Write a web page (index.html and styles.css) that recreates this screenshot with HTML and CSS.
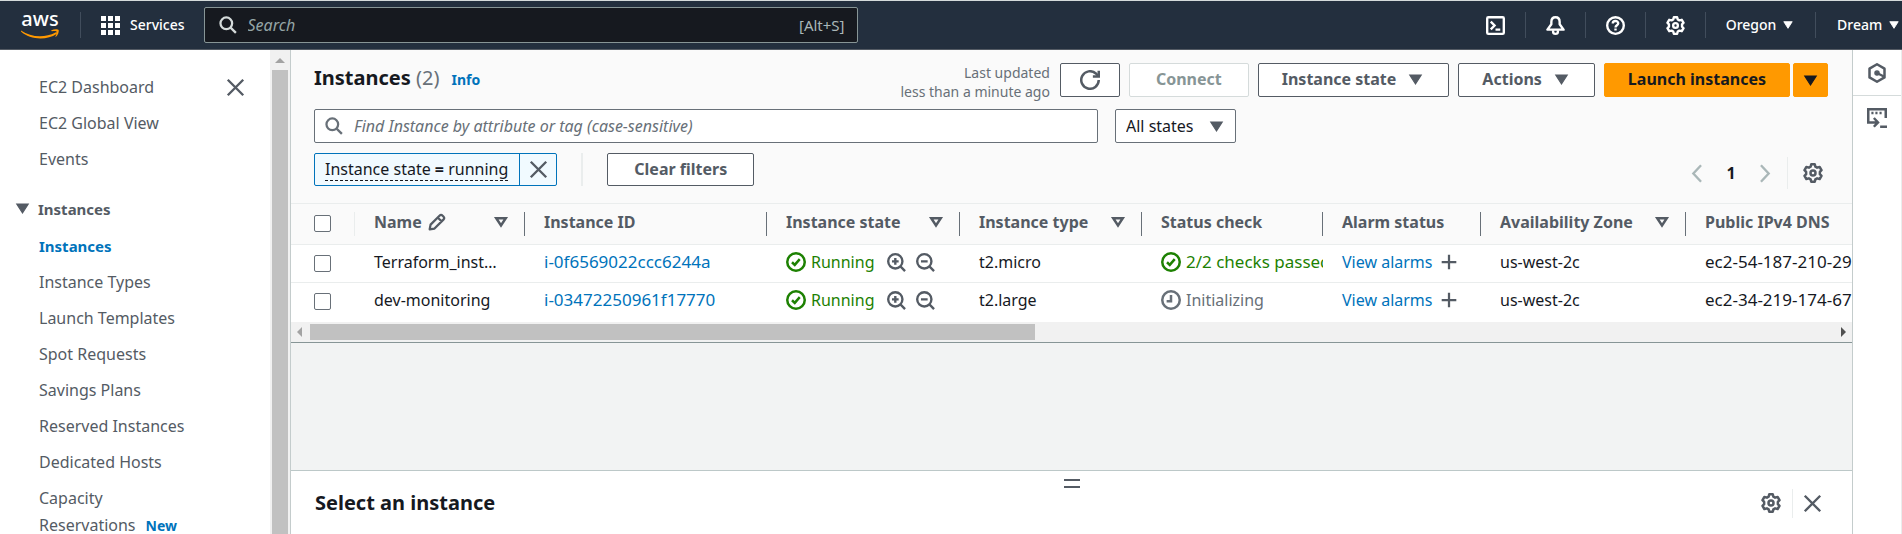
FILE: index.html
```html
<!DOCTYPE html>
<html lang="en">
<head>
<meta charset="utf-8">
<meta name="viewport" content="width=device-width, initial-scale=1">
<title>Instances | EC2</title>
<link rel="stylesheet" href="styles.css">
</head>
<body>
<svg class="sprite" aria-hidden="true">
  <symbol id="search" viewBox="0 0 16 16"><circle cx="6.5" cy="6.5" r="5.2"/><path d="M10.3 10.3 15 15"/></symbol>
  <symbol id="close" viewBox="0 0 16 16"><path d="M1.500 1.500l13 13M14.500 1.500l-13 13"/></symbol>
  <symbol id="caret" viewBox="0 0 16 16"><path class="solid" d="M3.2 4.2h9.600L8 11.800z"/></symbol>
  <symbol id="sort" viewBox="0 0 16 16"><path d="M4.200 5h7.600L8 10.800z"/></symbol>
  <symbol id="gear" viewBox="0 0 16 16"><path d="M6.6 1h2.8l.5 1.900 1.400.8 2-.5 1.500 2.500-1.300 1.400v1.800l1.300 1.400-1.500 2.500-2-.5-1.400.8-.5 1.900H6.600l-.5-1.900-1.400-.8-2 .5-1.500-2.500 1.300-1.400V7.100L1.200 5.700l1.500-2.500 2 .5 1.400-.8z" stroke-linejoin="round"/><circle cx="8" cy="8" r="2"/></symbol>
  <symbol id="check" viewBox="0 0 16 16"><circle cx="8" cy="8" r="7"/><path d="M4.800 8.200l2.200 2.100 4-4.600"/></symbol>
  <symbol id="pending" viewBox="0 0 16 16"><circle cx="8" cy="8" r="7"/><path d="M8 4v5H4.500"/></symbol>
  <symbol id="zoom-in" viewBox="0 0 16 16"><circle cx="7" cy="7" r="6"/><path d="M11.300 11.300 15.200 15.200M7 4.200v5.600M4.200 7h5.600"/></symbol>
  <symbol id="zoom-out" viewBox="0 0 16 16"><circle cx="7" cy="7" r="6"/><path d="M11.300 11.300 15.200 15.200M4.200 7h5.600"/></symbol>
  <symbol id="plus" viewBox="0 0 16 16"><path d="M8 1.500v13M1.500 8h13"/></symbol>
  <symbol id="edit" viewBox="0 0 16 16"><path d="M1.500 14.500l.8-4.200 7.900-7.900a2 2 0 0 1 2.800 0l.7.7a2 2 0 0 1 0 2.800L5.800 13.800zM8.800 4.200l3.200 3.200" stroke-linejoin="round"/></symbol>
  <symbol id="refresh" viewBox="0 0 16 16"><path d="M15 8a7 7 0 1 1-2.300-5.200l1.700 1.900"/><path d="M15 .5V5.200h-4.700"/></symbol>
  <symbol id="prev" viewBox="0 0 16 16"><path d="M11 1 4.500 8l6.500 7"/></symbol>
  <symbol id="next" viewBox="0 0 16 16"><path d="M5 1l6.500 7L5 15"/></symbol>
  <symbol id="shell" viewBox="0 0 16 16"><rect x="1" y="1" width="14" height="14" rx="1"/><path d="M4 4.800 7.200 8 4 11.200M8 11.500h4"/></symbol>
  <symbol id="bell" viewBox="0 0 16 16"><path d="M8 1C5.500 1 4.500 3 4.500 5v2L1.200 11.500h13.600L11.500 7V5c0-2-1-4-3.500-4z" stroke-linejoin="round"/><path d="M6 12v1.500a2 1.500 0 0 0 4 0V12"/></symbol>
  <symbol id="help" viewBox="0 0 16 16"><circle cx="8" cy="8" r="7"/><path d="M5.700 6.300C5.700 3.600 10.300 3.600 10.300 6.200 10.300 7.800 8 7.800 8 9.600M8 10.600v1.600"/></symbol>
  <symbol id="recent" viewBox="0 0 16 16"><path d="M8 1l6 3.500v7L8 15l-6-3.500v-7z" stroke-linejoin="round"/><circle class="solid" cx="8" cy="8" r="1.700"/><path d="M8 8l5.500 2.800"/></symbol>
  <symbol id="terminal" viewBox="0 0 16 16"><path d="M15 8V1H1v10.500h6.500M5.500 8l3.300 3.500L5.500 15M10.500 15H16"/><path d="M3.500 4h1.700M6.700 4h1.700M10 4h1.700"/></symbol>
</svg>

<header class="topbar">
  <a class="logo" href="#" aria-label="aws home"><span>aws</span>
    <svg class="smile" viewBox="0 0 38 10"><path d="M0 1.500C10 8.500 24 9 34.500 3.500 36 3 36.500 4 35.500 5 26 11.500 9 11 0 2.500-.5 1.500-.2 1.200 0 1.500z"/><path d="M30.500 1.200C33 0 37 0 37.700 1 38 3 37 6.200 35 7.800 34.400 8 34.200 7.800 34.500 7.300 35.300 5.500 36 3.300 35.500 2.500 34.800 1.800 32.500 2 31 2.200 30.200 2.100 30 1.600 30.500 1.200z"/></svg>
  </a>
  <span class="bar-rule"></span>
  <button class="services" type="button">
    <svg class="grid-icon" viewBox="0 0 19 19"><path d="M0 0h5v5H0zM7 0h5v5H7zM14 0h5v5h-5zM0 7h5v5H0zM7 7h5v5H7zM14 7h5v5h-5zM0 14h5v5H0zM7 14h5v5H7zM14 14h5v5h-5z"/></svg>
    Services</button>
  <label class="global-search"><svg class="icon i18"><use href="#search"/></svg>
    <input type="search" placeholder="Search" aria-label="Search"><span>[Alt+S]</span></label>
  <div class="bar-tools">
    <button type="button" aria-label="CloudShell"><svg class="icon"><use href="#shell"/></svg></button>
    <button type="button" aria-label="Notifications"><svg class="icon"><use href="#bell"/></svg></button>
    <button type="button" aria-label="Help"><svg class="icon"><use href="#help"/></svg></button>
    <button type="button" aria-label="Settings"><svg class="icon"><use href="#gear"/></svg></button>
    <button class="region" type="button">Oregon <svg class="icon i14"><use href="#caret"/></svg></button>
    <button class="account" type="button">Dream <svg class="icon i14"><use href="#caret"/></svg></button>
  </div>
</header>

<div class="shell">
  <nav class="sidebar" aria-label="EC2">
    <div class="nav-body">
      <div class="nav-top">
        <ul class="nav-list">
          <li><a href="#">EC2 Dashboard</a></li>
          <li><a href="#">EC2 Global View</a></li>
          <li><a href="#">Events</a></li>
        </ul>
        <button class="icon-button" type="button" aria-label="Close navigation"><svg class="icon"><use href="#close"/></svg></button>
      </div>
      <button class="nav-group" type="button"><svg class="icon"><use href="#caret"/></svg>Instances</button>
      <ul class="nav-list">
        <li><a class="current" href="#" aria-current="page">Instances</a></li>
        <li><a href="#">Instance Types</a></li>
        <li><a href="#">Launch Templates</a></li>
        <li><a href="#">Spot Requests</a></li>
        <li><a href="#">Savings Plans</a></li>
        <li><a href="#">Reserved Instances</a></li>
        <li><a href="#">Dedicated Hosts</a></li>
        <li><a href="#">Capacity<br>Reservations</a><span class="new">New</span></li>
      </ul>
    </div>
    <div class="vscroll"><span class="arrow-up"></span><span class="vthumb"></span></div>
  </nav>

  <main class="main">
    <section class="list-head">
      <div class="title-row">
        <h1>Instances <span class="count">(2)</span></h1><a class="info" href="#">Info</a>
        <p class="updated">Last updated<br>less than a minute ago</p>
        <div class="actions">
          <button class="btn refresh" type="button" aria-label="Refresh"><svg class="icon i20"><use href="#refresh"/></svg></button>
          <button class="btn wide" type="button" disabled>Connect</button>
          <button class="btn" type="button">Instance state <svg class="icon"><use href="#caret"/></svg></button>
          <button class="btn" type="button">Actions <svg class="icon"><use href="#caret"/></svg></button>
          <div class="split">
            <button class="btn primary" type="button">Launch instances</button>
            <button class="btn primary more" type="button" aria-label="More launch options"><svg class="icon"><use href="#caret"/></svg></button>
          </div>
        </div>
      </div>
      <div class="filter-row">
        <label class="filter"><svg class="icon i18"><use href="#search"/></svg>
          <input type="text" placeholder="Find Instance by attribute or tag (case-sensitive)" aria-label="Find Instance"></label>
        <div class="select"><select aria-label="State"><option>All states</option></select><svg class="icon"><use href="#caret"/></svg></div>
      </div>
      <div class="token-row">
        <div class="token"><span class="token-text"><span>Instance state <b>=</b> running</span></span>
          <button type="button" aria-label="Remove filter"><svg class="icon"><use href="#close"/></svg></button></div>
        <span class="token-rule"></span>
        <button class="btn wide" type="button">Clear filters</button>
        <div class="pager">
          <button class="page-step" type="button" aria-label="Previous page" disabled><svg class="icon"><use href="#prev"/></svg></button>
          <button class="page" type="button">1</button>
          <button class="page-step" type="button" aria-label="Next page" disabled><svg class="icon"><use href="#next"/></svg></button>
          <button class="prefs" type="button" aria-label="Preferences"><svg class="icon i20"><use href="#gear"/></svg></button>
        </div>
      </div>
    </section>

    <div class="table-wrap">
      <table>
        <colgroup><col class="c-check"><col class="c-name"><col class="c-id"><col class="c-state"><col class="c-type"><col class="c-status"><col class="c-alarm"><col class="c-zone"><col class="c-dns"></colgroup>
        <thead><tr>
          <th class="check"><div class="th light"><input type="checkbox" aria-label="Select all"></div></th>
          <th><div class="th">Name <svg class="icon i18 edit"><use href="#edit"/></svg><svg class="icon i20 sort"><use href="#sort"/></svg></div></th>
          <th><div class="th">Instance ID</div></th>
          <th><div class="th">Instance state<svg class="icon i20 sort"><use href="#sort"/></svg></div></th>
          <th><div class="th">Instance type<svg class="icon i20 sort"><use href="#sort"/></svg></div></th>
          <th><div class="th">Status check</div></th>
          <th><div class="th">Alarm status</div></th>
          <th><div class="th">Availability Zone<svg class="icon i20 sort"><use href="#sort"/></svg></div></th>
          <th><div class="th">Public IPv4 DNS</div></th>
        </tr></thead>
        <tbody>
          <tr>
            <td class="check"><input type="checkbox" aria-label="Select Terraform_inst"></td>
            <td>Terraform_inst…</td>
            <td class="numeric"><a href="#">i-0f6569022ccc6244a</a></td>
            <td><div class="cell ok"><svg class="icon i20"><use href="#check"/></svg>Running<button type="button" aria-label="Include state"><svg class="icon"><use href="#zoom-in"/></svg></button><button type="button" aria-label="Exclude state"><svg class="icon"><use href="#zoom-out"/></svg></button></div></td>
            <td>t2.micro</td>
            <td class="numeric"><div class="cell ok"><svg class="icon i20"><use href="#check"/></svg>2/2 checks passed</div></td>
            <td><div class="cell"><a href="#">View alarms</a><button class="add" type="button" aria-label="Add alarm"><svg class="icon i18"><use href="#plus"/></svg></button></div></td>
            <td>us-west-2c</td>
            <td class="numeric">ec2-54-187-210-29</td>
          </tr>
          <tr>
            <td class="check"><input type="checkbox" aria-label="Select dev-monitoring"></td>
            <td>dev-monitoring</td>
            <td class="numeric"><a href="#">i-03472250961f17770</a></td>
            <td><div class="cell ok"><svg class="icon i20"><use href="#check"/></svg>Running<button type="button" aria-label="Include state"><svg class="icon"><use href="#zoom-in"/></svg></button><button type="button" aria-label="Exclude state"><svg class="icon"><use href="#zoom-out"/></svg></button></div></td>
            <td>t2.large</td>
            <td><div class="cell wait"><svg class="icon i20"><use href="#pending"/></svg>Initializing</div></td>
            <td><div class="cell"><a href="#">View alarms</a><button class="add" type="button" aria-label="Add alarm"><svg class="icon i18"><use href="#plus"/></svg></button></div></td>
            <td>us-west-2c</td>
            <td class="numeric">ec2-34-219-174-67</td>
          </tr>
        </tbody>
      </table>
    </div>
    <div class="hscroll"><span class="arrow-left"></span><span class="htrack"><span class="hthumb"></span></span><span class="arrow-right"></span></div>
    <div class="empty"></div>

    <section class="panel">
      <span class="handle"></span>
      <div class="panel-head">
        <h2>Select an instance</h2>
        <button class="panel-gear" type="button" aria-label="Panel preferences"><svg class="icon i20"><use href="#gear"/></svg></button>
        <button class="panel-close" type="button" aria-label="Close panel"><svg class="icon"><use href="#close"/></svg></button>
      </div>
    </section>
  </main>

  <aside class="rail">
    <button type="button" aria-label="Recent"><svg class="icon i20"><use href="#recent"/></svg></button>
    <button type="button" aria-label="Terminal"><svg class="icon i20"><use href="#terminal"/></svg></button>
  </aside>
</div>
</body>
</html>
```

FILE: styles.css
```css
* { box-sizing: border-box; }

body {
  margin: 0;
  height: 100vh;
  display: flex;
  flex-direction: column;
  overflow: hidden;
  background: #fff;
  color: #16191f;
  font: 16px/24px "Noto Sans", "Open Sans", sans-serif;
}

button, input, select { font: inherit; color: inherit; margin: 0; }
button { padding: 0; border: 0; background: none; }
a { color: #0073bb; text-decoration: none; }
h1, h2, p, ul { margin: 0; padding: 0; }

.sprite { position: absolute; width: 0; height: 0; }
.icon { width: 19px; height: 19px; flex: none; display: block; fill: none; stroke: currentColor; stroke-width: 2; overflow: visible; }
.i14 { width: 14px; height: 14px; }
.i18 { width: 18px; height: 18px; }
.i20 { width: 20px; height: 20px; }
.solid { fill: currentColor; stroke-width: 1; }

/* Top bar */
.topbar {
  flex: none;
  display: flex;
  align-items: center;
  height: 50px;
  padding-left: 21px;
  background: #232f3e;
  border-top: 1px solid #d5dbdb;
  border-bottom: 1px solid #545b64;
  color: #fff;
  font-size: 14px;
  font-weight: 500;
}
.logo { width: 38px; color: #fff; font-size: 20px; line-height: 16px; text-align: center; }
.logo span { display: block; }
.smile { display: block; width: 38px; height: 10px; margin-top: 2px; fill: #f90; }
.bar-rule { width: 1px; height: 26px; margin: 0 20px 0 21px; background: #414d5c; }
.services { display: flex; align-items: center; gap: 10px; }
.grid-icon { width: 19px; height: 19px; fill: #fff; }
.global-search {
  display: flex;
  align-items: center;
  width: 654px;
  height: 36px;
  margin-left: 19px;
  padding: 0 12px 0 14px;
  border: 1px solid #879596;
  border-radius: 2px;
  background: #16191f;
  color: #d5dbdb;
}
.global-search input { flex: 1; min-width: 0; padding: 0 0 0 11px; border: 0; background: none; font-size: 16px; font-weight: 400; outline: 0; }
.global-search input::placeholder { color: #95a5a6; font-style: italic; opacity: 1; }
.global-search span { color: #aab7b8; font-size: 15px; font-weight: 400; }
.bar-tools { display: flex; margin-left: auto; }
.bar-tools button { display: flex; align-items: center; justify-content: center; width: 60px; height: 26px; border-right: 1px solid #414d5c; }
.bar-tools .region { width: 110px; gap: 5px; }
.bar-tools .account { width: 86px; gap: 5px; padding-left: 21px; justify-content: flex-start; border: 0; }

.shell { flex: 1; display: flex; min-height: 0; }

/* Side navigation */
.sidebar { flex: none; display: flex; width: 291px; border-right: 1px solid #c4cccc; overflow: hidden; color: #545b64; }
.nav-body { flex: 1; padding-top: 20px; }
.nav-top { display: flex; justify-content: space-between; padding-right: 25px; }
.nav-top .icon-button { align-self: flex-start; padding-top: 8px; }
.nav-list { padding-left: 39px; list-style: none; }
.nav-list li { padding: 4px 0 5px; line-height: 27px; }
.nav-list a { color: #545b64; }
.nav-list .current { color: #0073bb; font-weight: 700; font-size: 15px; }
.new { margin-left: 10px; color: #0073bb; font-size: 14px; font-weight: 700; }
.nav-group { display: flex; align-items: center; gap: 6px; height: 27px; margin: 17px 0 7px 13px; font-size: 15px; font-weight: 700; }
.vscroll { width: 20px; background: #f1f1f1; display: flex; flex-direction: column; align-items: center; padding-top: 8px; }
.arrow-up { border: 5px solid transparent; border-top: 0; border-bottom: 5px solid #a3a3a3; }
.vthumb { flex: 1; width: 16px; margin-top: 7px; background: #c1c1c1; }

/* Instance list */
.main { flex: 1; min-width: 0; display: flex; flex-direction: column; background: #fafafa; }
.list-head { padding: 13px 24px 17px 23px; }
.title-row { display: flex; align-items: flex-start; height: 46px; }
h1 { font-size: 20px; line-height: 30px; }
.count { color: #687078; font-weight: 400; }
.info { margin-left: 12px; padding-top: 4px; font-size: 14px; line-height: 26px; font-weight: 700; }
.updated { margin-left: auto; color: #687078; font-size: 14px; line-height: 19px; text-align: right; }
.actions { display: flex; gap: 9px; margin-left: 10px; }
.btn {
  display: flex;
  align-items: center;
  justify-content: center;
  gap: 10px;
  height: 34px;
  padding: 0 23px 2px;
  border: 1px solid #545b64;
  border-radius: 2px;
  background: #fff;
  color: #545b64;
  font-weight: 700;
  white-space: nowrap;
}
.btn.wide { padding: 0 26px 2px; }
.btn:disabled { border-color: #d5dbdb; color: #879596; }
.btn.refresh { width: 60px; padding: 0; }
.split { display: flex; gap: 3px; }
.primary { border-color: #f90; background: #f90; color: #16191f; }
.btn.more { width: 35px; padding: 0; }

.filter-row { display: flex; gap: 17px; }
.filter { display: flex; align-items: center; width: 784px; height: 34px; padding: 0 10px; border: 1px solid #687078; border-radius: 2px; background: #fff; color: #687078; }
.filter input { flex: 1; min-width: 0; padding: 0 0 0 11px; border: 0; background: none; outline: 0; }
.filter input::placeholder { color: #687078; font-style: italic; opacity: 1; }
.select { position: relative; width: 121px; }
.select select { width: 100%; height: 34px; padding: 0 30px 0 10px; border: 1px solid #687078; border-radius: 2px; background: #fff; appearance: none; }
.select .icon { position: absolute; right: 10px; top: 8px; color: #545b64; pointer-events: none; }

.token-row { display: flex; align-items: flex-start; margin-top: 10px; height: 33px; }
.token { display: flex; height: 33px; border: 1px solid #0073bb; border-radius: 2px; background: #f1faff; }
.token-text { display: flex; align-items: center; padding: 0 11px 0 10px; border-right: 1px solid #0073bb; }
.token-text > span { border-bottom: 1px dashed #16191f; line-height: 22px; }
.token button { display: flex; align-items: center; justify-content: center; width: 36px; color: #545b64; }
.token-rule { width: 2px; height: 33px; margin: 0 24px; background: #eaeded; }
.token-row .btn { height: 33px; }
.pager { display: flex; align-items: center; height: 32px; margin: 4px 5px 0 auto; color: #545b64; }
.pager .page-step { color: #aab7b8; }
.page { width: 48px; color: #16191f; font-weight: 700; }
.prefs { height: 32px; margin-left: 13px; padding-left: 15px; border-left: 1px solid #eaeded; }

.table-wrap { overflow: hidden; border-top: 1px solid #eaeded; background: #fff; }
table { width: 1950px; table-layout: fixed; border-collapse: collapse; }
.c-check { width: 64px; }
.c-name { width: 170px; }
.c-id { width: 242px; }
.c-state { width: 193px; }
.c-type { width: 182px; }
.c-status { width: 181px; }
.c-alarm { width: 158px; }
.c-zone { width: 205px; }
thead { background: #fafafa; }
th { height: 40px; padding: 0; border-bottom: 1px solid #eaeded; color: #545b64; text-align: left; }
.th { display: flex; align-items: center; height: 24px; padding: 0 13px 3px 19px; border-right: 1px solid #687078; white-space: nowrap; }
.th.light { padding: 0 0 0 23px; border-color: #eaeded; }
.sort { margin-left: auto; }
.edit { margin-left: 6px; }
td { height: 38px; padding: 0 0 2px 19px; overflow: hidden; white-space: nowrap; }
tbody tr + tr td { border-top: 1px solid #eaeded; height: 40px; padding-bottom: 4px; }
td.check { padding: 0 0 0 23px; }
tbody tr + tr td.check { padding-bottom: 2px; }
.numeric { font-size: 17px; }
input[type="checkbox"] { appearance: none; display: block; width: 17px; height: 17px; border: 1px solid #687078; border-radius: 2px; background: #fff; }
.cell { display: flex; align-items: center; }
.cell > .icon { margin-right: 5px; }
.cell button { margin-left: 13px; color: #545b64; }
.cell button + button { margin-left: 10px; }
.cell .add { margin-left: 8px; }
.ok { color: #1d8102; }
.wait { color: #687078; }

.hscroll { display: flex; align-items: center; flex: none; height: 20px; padding: 0 6px; background: #f1f1f1; }
.htrack { flex: 1; margin: 0 8px; }
.hthumb { display: block; width: 47.6%; height: 16px; background: #c1c1c1; }
.arrow-left { border: 5px solid transparent; border-left: 0; border-right: 5px solid #a3a3a3; }
.arrow-right { border: 5px solid transparent; border-right: 0; border-left: 5px solid #505050; }
.empty { flex: 1; border-top: 1px solid #879596; background: #f2f3f3; }

/* Split panel */
.panel { flex: none; height: 64px; padding: 8px 24px 0; border-top: 1px solid #bcc8c8; background: #fff; }
.handle { display: block; width: 16px; height: 9px; margin: 0 auto; border: solid #545b64; border-width: 2px 0; }
.panel-head { display: flex; align-items: center; height: 30px; color: #545b64; }
h2 { color: #16191f; font-size: 20px; line-height: 28px; }
.panel-gear { margin-left: auto; padding-right: 11px; }
.panel-close { display: flex; align-items: center; height: 29px; padding: 0 6px 0 10px; border-left: 1px solid #eaeded; }

/* Tool rail */
.rail { flex: none; width: 50px; border: solid #c4cccc; border-width: 0 1px; border-right-color: #eaeded; background: #fff; color: #545b64; }
.rail button { display: flex; justify-content: center; align-items: center; width: 100%; height: 46px; border-bottom: 1px solid #d5dbdb; }
.rail button:last-child { height: 44px; border: 0; }
```
